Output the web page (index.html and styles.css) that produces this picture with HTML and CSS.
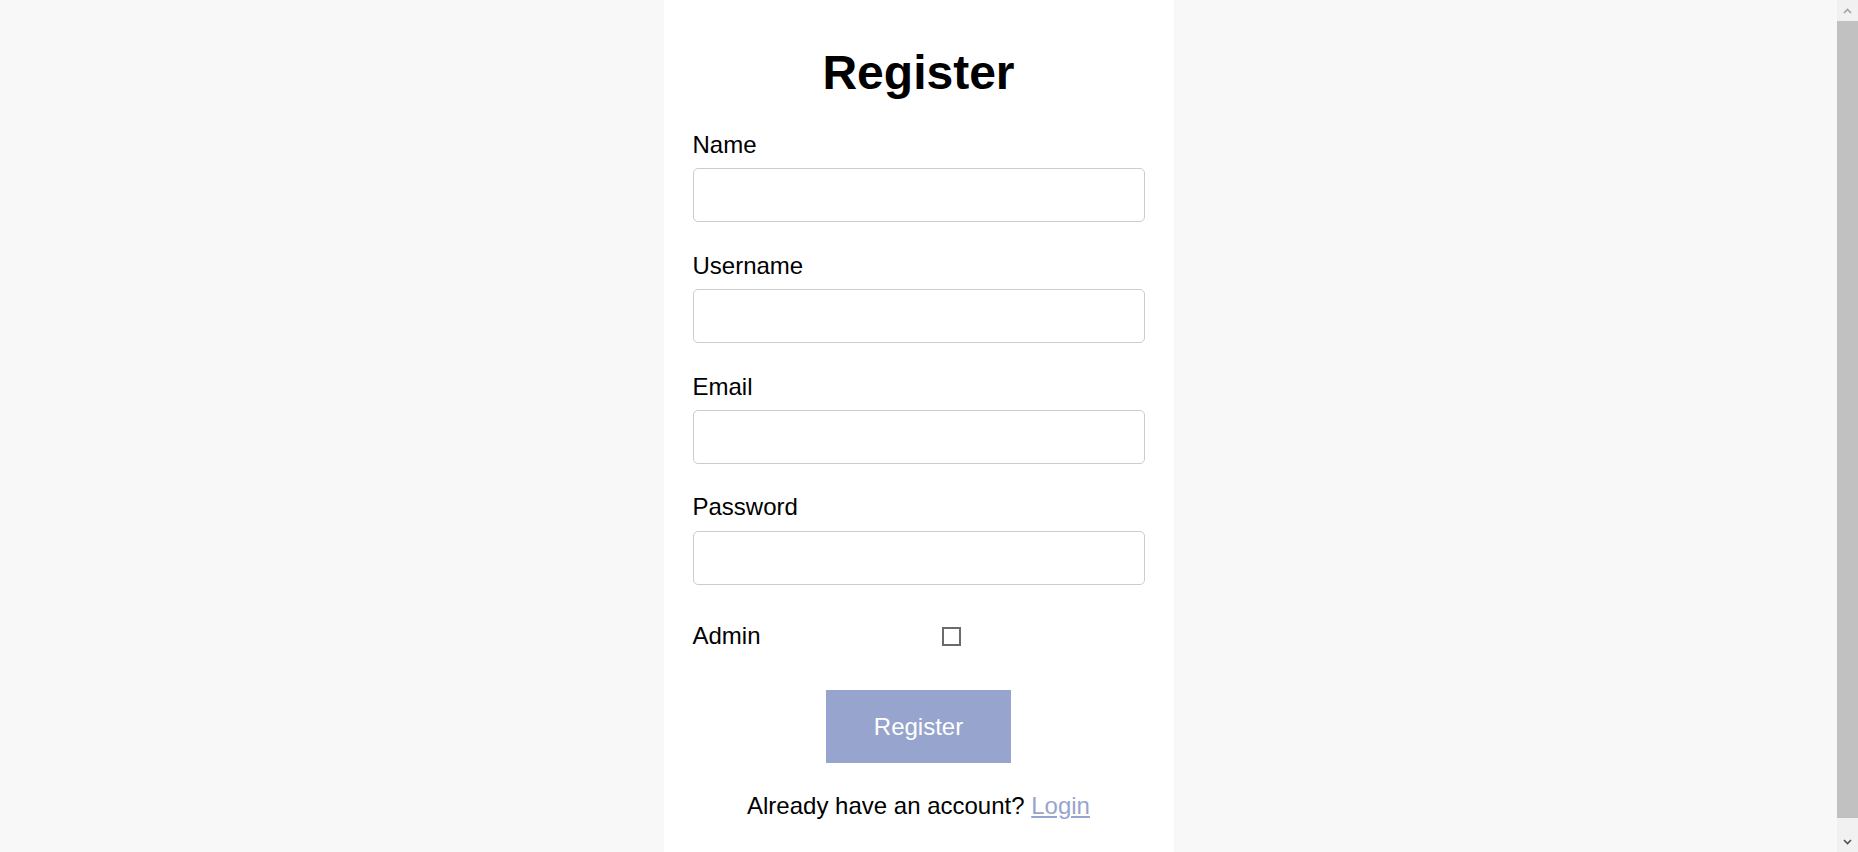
FILE: index.html
```html
<!DOCTYPE html>
<html lang="en">
<head>
    <meta charset="UTF-8">
    <meta name="viewport" content="width=device-width, initial-scale=1.0">
    <title>Register</title>
    <link rel="stylesheet" href="styles.css">
</head>
<body>
    <div class="register-container">
        <h1>Register</h1>
        <form class="register-form" onsubmit="return false;">
            <div class="form-group">
                <label for="name">Name</label>
                <input type="text" id="name" name="name">
            </div>
            <div class="form-group">
                <label for="username">Username</label>
                <input type="text" id="username" name="username">
            </div>
            <div class="form-group">
                <label for="email">Email</label>
                <input type="email" id="email" name="email">
            </div>
            <div class="form-group">
                <label for="password">Password</label>
                <input type="password" id="password" name="password">
            </div>
            <div class="admin-row">
                <label for="admin">Admin</label>
                <input type="checkbox" id="admin" name="admin">
            </div>
            <div class="button-row">
                <button type="submit">Register</button>
            </div>
        </form>
        <p class="login-link">Already have an account? <a href="#">Login</a></p>
    </div>

    <!-- window scrollbar, as in the capture -->
    <div class="fake-scrollbar">
        <div class="sb-btn">
            <svg width="9" height="6" viewBox="0 0 9 6"><polyline points="1,5 4.5,1.5 8,5" fill="none" stroke="#a3a3a3" stroke-width="1.6"/></svg>
        </div>
        <div class="sb-track">
            <div class="sb-thumb"></div>
        </div>
        <div class="sb-btn">
            <svg width="9" height="6" viewBox="0 0 9 6"><polyline points="1,1 4.5,4.5 8,1" fill="none" stroke="#505050" stroke-width="1.6"/></svg>
        </div>
    </div>
</body>
</html>
```

FILE: styles.css
```css
html {
    background-color: #f8f8f8;
}
body {
    font-family: 'Liberation Sans', Arial, sans-serif;
    background-color: #f8f8f8;
    color: #000;
    margin: 0;
    padding-right: 21px; /* room for the scrollbar */
    font-size: 24px;
}
.register-container {
    width: 510px;
    box-sizing: border-box;
    margin: 0 auto;
    padding: 45px 29px 56px;
    background-color: #fff;
}
h1 {
    font-size: 48px;
    line-height: 55px;
    text-align: center;
    margin: 0 0 31px;
}
.form-group {
    margin-bottom: 29.5px;
}
.form-group label {
    display: block;
    line-height: 28px;
    margin-bottom: 9.3px;
}
.form-group input {
    display: block;
    width: 100%;
    height: 54px;
    box-sizing: border-box;
    border: 1px solid #ccc;
    border-radius: 5px;
    padding: 0 12px;
    font-size: 20px;
    font-family: inherit;
    outline: none;
}
.form-group input:focus {
    border-color: #97a4cd;
}
.admin-row {
    display: flex;
    align-items: center;
    padding-top: 8px;
    line-height: 28px;
}
.admin-row label {
    width: 249px;
    flex-shrink: 0;
}
.admin-row input {
    appearance: none;
    -webkit-appearance: none;
    width: 19px;
    height: 19px;
    margin: 0;
    border: 2px solid #6b6b6b;
    box-sizing: border-box;
    background-color: #fff;
}
.admin-row input:checked {
    background-color: #6b6b6b;
}
.button-row {
    text-align: center;
    margin-top: 40px;
}
button {
    background-color: #97a4cd;
    color: #fff;
    border: none;
    padding: 23px 48px;
    font-size: 24px;
    line-height: 27px;
    font-family: inherit;
    cursor: pointer;
}
button:hover {
    background-color: #8795c4;
}
.login-link {
    text-align: center;
    line-height: 28px;
    margin: 29px 0 0;
}
.login-link a {
    color: #97a4cd;
}
.fake-scrollbar {
    position: fixed;
    top: 0;
    right: 0;
    bottom: 0;
    width: 21px;
    background-color: #f1f1f1;
    display: flex;
    flex-direction: column;
}
.sb-btn {
    height: 21px;
    display: flex;
    align-items: center;
    justify-content: center;
}
.sb-track {
    flex: 1;
    display: flex;
    flex-direction: column;
}
.sb-thumb {
    height: 797px;
    background-color: #c1c1c1;
}
```
